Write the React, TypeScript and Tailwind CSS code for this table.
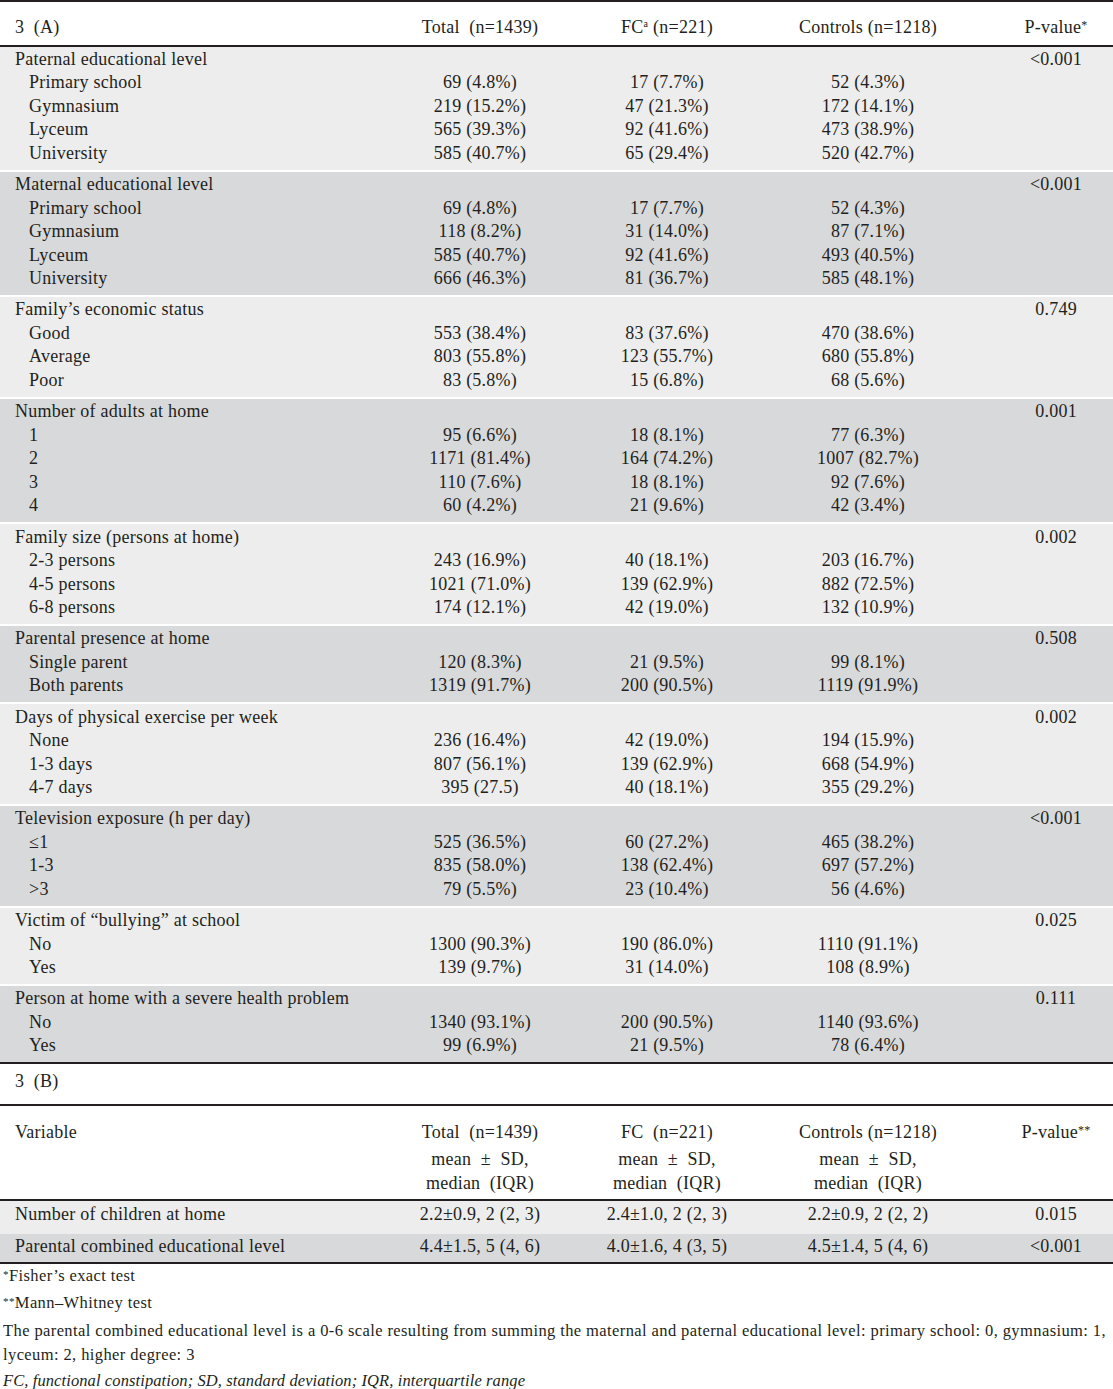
type Group = {
  title: string
  p: string
  rows: [string, string, string, string][]
}

const groupsA: Group[] = [
  {
    title: 'Paternal educational level',
    p: '<0.001',
    rows: [
      ['Primary school', '69 (4.8%)', '17 (7.7%)', '52 (4.3%)'],
      ['Gymnasium', '219 (15.2%)', '47 (21.3%)', '172 (14.1%)'],
      ['Lyceum', '565 (39.3%)', '92 (41.6%)', '473 (38.9%)'],
      ['University', '585 (40.7%)', '65 (29.4%)', '520 (42.7%)'],
    ],
  },
  {
    title: 'Maternal educational level',
    p: '<0.001',
    rows: [
      ['Primary school', '69 (4.8%)', '17 (7.7%)', '52 (4.3%)'],
      ['Gymnasium', '118 (8.2%)', '31 (14.0%)', '87 (7.1%)'],
      ['Lyceum', '585 (40.7%)', '92 (41.6%)', '493 (40.5%)'],
      ['University', '666 (46.3%)', '81 (36.7%)', '585 (48.1%)'],
    ],
  },
  {
    title: 'Family’s economic status',
    p: '0.749',
    rows: [
      ['Good', '553 (38.4%)', '83 (37.6%)', '470 (38.6%)'],
      ['Average', '803 (55.8%)', '123 (55.7%)', '680 (55.8%)'],
      ['Poor', '83 (5.8%)', '15 (6.8%)', '68 (5.6%)'],
    ],
  },
  {
    title: 'Number of adults at home',
    p: '0.001',
    rows: [
      ['1', '95 (6.6%)', '18 (8.1%)', '77 (6.3%)'],
      ['2', '1171 (81.4%)', '164 (74.2%)', '1007 (82.7%)'],
      ['3', '110 (7.6%)', '18 (8.1%)', '92 (7.6%)'],
      ['4', '60 (4.2%)', '21 (9.6%)', '42 (3.4%)'],
    ],
  },
  {
    title: 'Family size (persons at home)',
    p: '0.002',
    rows: [
      ['2-3 persons', '243 (16.9%)', '40 (18.1%)', '203 (16.7%)'],
      ['4-5 persons', '1021 (71.0%)', '139 (62.9%)', '882 (72.5%)'],
      ['6-8 persons', '174 (12.1%)', '42 (19.0%)', '132 (10.9%)'],
    ],
  },
  {
    title: 'Parental presence at home',
    p: '0.508',
    rows: [
      ['Single parent', '120 (8.3%)', '21 (9.5%)', '99 (8.1%)'],
      ['Both parents', '1319 (91.7%)', '200 (90.5%)', '1119 (91.9%)'],
    ],
  },
  {
    title: 'Days of physical exercise per week',
    p: '0.002',
    rows: [
      ['None', '236 (16.4%)', '42 (19.0%)', '194 (15.9%)'],
      ['1-3 days', '807 (56.1%)', '139 (62.9%)', '668 (54.9%)'],
      ['4-7 days', '395 (27.5)', '40 (18.1%)', '355 (29.2%)'],
    ],
  },
  {
    title: 'Television exposure (h per day)',
    p: '<0.001',
    rows: [
      ['≤1', '525 (36.5%)', '60 (27.2%)', '465 (38.2%)'],
      ['1-3', '835 (58.0%)', '138 (62.4%)', '697 (57.2%)'],
      ['>3', '79 (5.5%)', '23 (10.4%)', '56 (4.6%)'],
    ],
  },
  {
    title: 'Victim of “bullying” at school',
    p: '0.025',
    rows: [
      ['No', '1300 (90.3%)', '190 (86.0%)', '1110 (91.1%)'],
      ['Yes', '139 (9.7%)', '31 (14.0%)', '108 (8.9%)'],
    ],
  },
  {
    title: 'Person at home with a severe health problem',
    p: '0.111',
    rows: [
      ['No', '1340 (93.1%)', '200 (90.5%)', '1140 (93.6%)'],
      ['Yes', '99 (6.9%)', '21 (9.5%)', '78 (6.4%)'],
    ],
  },
]

const rowsB = [
  ['Number of children at home', '2.2±0.9, 2 (2, 3)', '2.4±1.0, 2 (2, 3)', '2.2±0.9, 2 (2, 2)', '0.015'],
  ['Parental combined educational level', '4.4±1.5, 5 (4, 6)', '4.0±1.6, 4 (3, 5)', '4.5±1.4, 5 (4, 6)', '<0.001'],
]

const grid = 'grid grid-cols-[380px_200px_174px_228px_131px]'

function GroupBlock({ group, dark }: { group: Group; dark: boolean }) {
  return (
    <div className={`${dark ? 'bg-[#d8d9da]' : 'bg-[#ededed]'} pt-[1.4px] pb-[4.4px]`}>
      <div className={grid}>
        <div className="pl-[15px]">{group.title}</div>
        <div />
        <div />
        <div />
        <div className="pl-[17px] text-center">{group.p}</div>
      </div>
      {group.rows.map((r) => (
        <div key={r[0]} className={grid}>
          <div className="pl-[29px]">{r[0]}</div>
          <div className="text-center">{r[1]}</div>
          <div className="text-center">{r[2]}</div>
          <div className="text-center">{r[3]}</div>
          <div />
        </div>
      ))}
    </div>
  )
}

export default function App() {
  return (
    <div
      className="min-h-screen bg-white text-[18px] leading-[23.5px] tracking-[0.25px] text-[#231f20]"
      style={{ fontFamily: '"Liberation Serif", "Times New Roman", serif' }}
    >
      <div className="border-t-2 border-b-2 border-[#231f20] pt-[14px] pb-[3px]">
        <div className={grid}>
          <div className="pl-[15px] whitespace-pre">3  (A)</div>
          <div className="text-center whitespace-pre">Total  (n=1439)</div>
          <div className="text-center">
            FC<span className="relative -top-[6px] text-[10px]">a</span> (n=221)
          </div>
          <div className="text-center">Controls (n=1218)</div>
          <div className="pl-[17px] text-center">
            P-value<span className="relative -top-[4px] text-[12px]">*</span>
          </div>
        </div>
      </div>

      <div className="flex flex-col gap-[2px] border-b-2 border-[#231f20]">
        {groupsA.map((g, i) => (
          <GroupBlock key={g.title} group={g} dark={i % 2 === 1} />
        ))}
      </div>

      <div className="border-b-2 border-[#231f20] pt-[6px] pb-[10px] pl-[15px] whitespace-pre">3  (B)</div>

      <div className="border-b-2 border-[#231f20] pt-[15px] pb-[4px]">
        <div className={grid}>
          <div className="pl-[15px]">Variable</div>
          <div className="text-center whitespace-pre">Total  (n=1439)</div>
          <div className="text-center whitespace-pre">FC  (n=221)</div>
          <div className="text-center">Controls (n=1218)</div>
          <div className="pl-[17px] text-center">
            P-value<span className="relative -top-[4px] text-[12px]">**</span>
          </div>
        </div>
        <div className={`${grid} mt-[2px]`}>
          <div />
          {[0, 1, 2].map((k) => (
            <div key={k} className="text-center">
              <div className="whitespace-pre">mean  ±  SD,</div>
              <div className="whitespace-pre">median  (IQR)</div>
            </div>
          ))}
          <div />
        </div>
      </div>

      <div className="border-b-2 border-[#231f20]">
        {rowsB.map((r, i) => (
          <div
            key={r[0]}
            className={`${grid} ${i % 2 === 1 ? 'bg-[#d8d9da] pt-[1px] pb-[4px]' : 'bg-[#ededed] pt-[2px] pb-[7px]'}`}
          >
            <div className="pl-[15px]">{r[0]}</div>
            <div className="text-center">{r[1]}</div>
            <div className="text-center">{r[2]}</div>
            <div className="text-center">{r[3]}</div>
            <div className="pl-[17px] text-center">{r[4]}</div>
          </div>
        ))}
      </div>

      <div className="pl-[3px] pt-[2px] text-[16.5px] leading-[20px] tracking-[0.4px]">
        <p>
          <span className="relative -top-[3px] text-[11px]">*</span>Fisher’s exact test
        </p>
        <p className="mt-[6px]">
          <span className="relative -top-[3px] text-[11px]">**</span>Mann–Whitney test
        </p>
        <p className="mt-[5px] leading-[24px]">
          The parental combined educational level is a 0-6 scale resulting from summing the maternal and paternal
          educational level: primary school: 0, gymnasium: 1,
          <br />
          lyceum: 2, higher degree: 3
        </p>
        <p className="mt-[4px] italic tracking-[0.1px]">
          FC, functional constipation; SD, standard deviation; IQR, interquartile range
        </p>
      </div>
    </div>
  )
}
